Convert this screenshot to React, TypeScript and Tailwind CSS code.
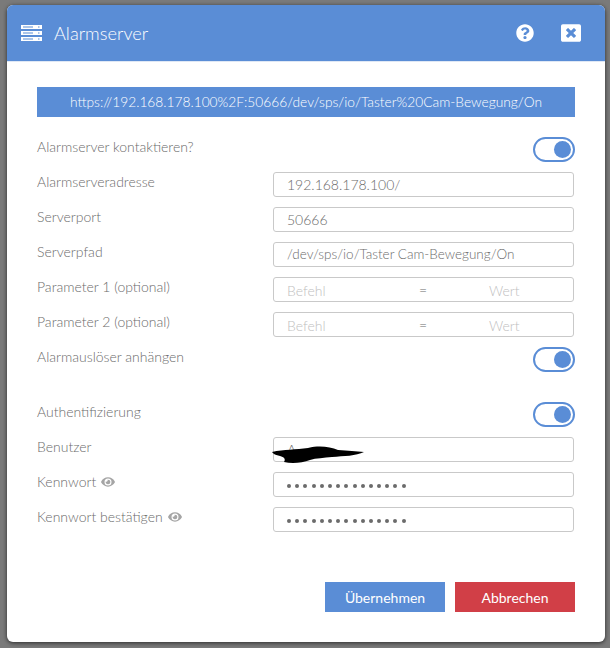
import { FaEye, FaQuestionCircle, FaWindowClose } from "react-icons/fa";

function Toggle() {
  return (
    <div className="flex h-[25px] w-[42px] items-center justify-end rounded-full border-2 border-[#5a8dd6] bg-white pr-[2px]">
      <div className="h-[17px] w-[17px] rounded-full bg-[#5a8dd6]" />
    </div>
  );
}

function Label({ children }: { children: React.ReactNode }) {
  return <div className="flex h-[19px] items-center gap-[5px] text-[14px] text-[#6b6b6b]">{children}</div>;
}

function Field({ children }: { children: React.ReactNode }) {
  return (
    <div className="relative flex h-[25px] w-[301px] items-center rounded-[3px] border border-[#c9c9c9] bg-white pl-[13px] text-[14px] text-[#6b6b6b]">
      {children}
    </div>
  );
}

function ToggleRow({ label }: { label: string }) {
  return (
    <div className="flex h-[25px] items-start justify-between">
      <Label>{label}</Label>
      <Toggle />
    </div>
  );
}

function FieldRow({ label, children }: { label: React.ReactNode; children: React.ReactNode }) {
  return (
    <div className="flex h-[25px] items-start justify-between pr-px">
      <Label>{label}</Label>
      <Field>{children}</Field>
    </div>
  );
}

function ParamField() {
  return (
    <div className="grid w-full grid-cols-[132px_24px_1fr] pt-[2px] text-[#c0c0c0]">
      <span>Befehl</span>
      <span className="-translate-y-px text-[#6b6b6b]">=</span>
      <span className="pl-[46px]">Wert</span>
    </div>
  );
}

function Dots() {
  return (
    <div className="flex gap-[4.2px] pt-[2px]">
      {Array.from({ length: 15 }).map((_, i) => (
        <span key={i} className="h-[4px] w-[4px] rounded-full bg-[#6b6b6b]" />
      ))}
    </div>
  );
}

function ServerIcon() {
  return (
    <svg width="21" height="16" viewBox="0 0 21 16" fill="white">
      <path d="M0 0h21v4H0z M0 6h21v4H0z M0 12h21v4H0z" fillRule="evenodd" />
      <path d="M2 1.5h10v1H2z M2 7.5h10v1H2z M2 13.5h10v1H2z" fill="#5a8dd6" />
      <path d="M17 1.5h1.5v1H17z M17 7.5h1.5v1H17z M17 13.5h1.5v1H17z" fill="#5a8dd6" />
    </svg>
  );
}

export default function App() {
  return (
    <div className="h-[648px] w-[610px] bg-[#7a7a7a] pl-[7px] pt-[5px] font-['Lato',sans-serif] font-light">
      <div className="flex h-[637px] w-[598px] flex-col overflow-hidden rounded-[6px] bg-white shadow-[0_1px_4px_rgba(0,0,0,0.65)]">
        <div className="flex h-[57px] shrink-0 items-center border-b border-[#dfe8f5] bg-[#5a8dd6] pl-[14px] pr-[24px] text-white">
          <ServerIcon />
          <span className="ml-[12px] translate-y-px text-[18.2px]">Alarmserver</span>
          <FaQuestionCircle className="ml-auto text-[18px]" />
          <FaWindowClose className="ml-[27px] text-[20px]" />
        </div>
        <div className="flex flex-1 flex-col px-[30px] pt-[25px]">
          <div className="flex h-[30px] items-center justify-center bg-[#5a8dd6] text-[13.75px] text-white">
            https://192.168.178.100%2F:50666/dev/sps/io/Taster%20Cam-Bewegung/On
          </div>
          <div className="mt-[20px] flex flex-col gap-[10px]">
            <ToggleRow label="Alarmserver kontaktieren?" />
            <FieldRow label="Alarmserveradresse">192.168.178.100/</FieldRow>
            <FieldRow label="Serverport">50666</FieldRow>
            <FieldRow label="Serverpfad">
              <span className="text-[13.5px]">/dev/sps/io/Taster Cam-Bewegung/On</span>
            </FieldRow>
            <FieldRow label="Parameter 1 (optional)"><ParamField /></FieldRow>
            <FieldRow label="Parameter 2 (optional)"><ParamField /></FieldRow>
            <ToggleRow label="Alarmauslöser anhängen" />
            <div className="mt-[20px]">
              <ToggleRow label="Authentifizierung" />
            </div>
            <FieldRow label="Benutzer">
              <span>A</span>
              <svg className="absolute left-[-2px] top-[6px]" width="94" height="22" viewBox="0 0 94 22" fill="black">
                <path d="M0 8 C12 5 24 6 36 4 C48 1 58 3 66 6 C76 7 84 7 92 8 C84 12 72 12 60 13 C52 14 44 14 38 16 C30 19 20 20 12 18 C14 15 12 13 8 12 C4 11 1 10 0 8Z" />
              </svg>
            </FieldRow>
            <FieldRow label={<>Kennwort <FaEye className="text-[14px] text-[#a5a5a5]" /></>}><Dots /></FieldRow>
            <FieldRow label={<>Kennwort bestätigen <FaEye className="text-[14px] text-[#a5a5a5]" /></>}><Dots /></FieldRow>
          </div>
          <div className="mt-[50px] flex justify-end gap-[10px] text-[14px] font-normal text-white">
            <button className="h-[30px] w-[120px] bg-[#5a8dd6]">Übernehmen</button>
            <button className="h-[30px] w-[120px] bg-[#d13f47]">Abbrechen</button>
          </div>
        </div>
      </div>
    </div>
  );
}
